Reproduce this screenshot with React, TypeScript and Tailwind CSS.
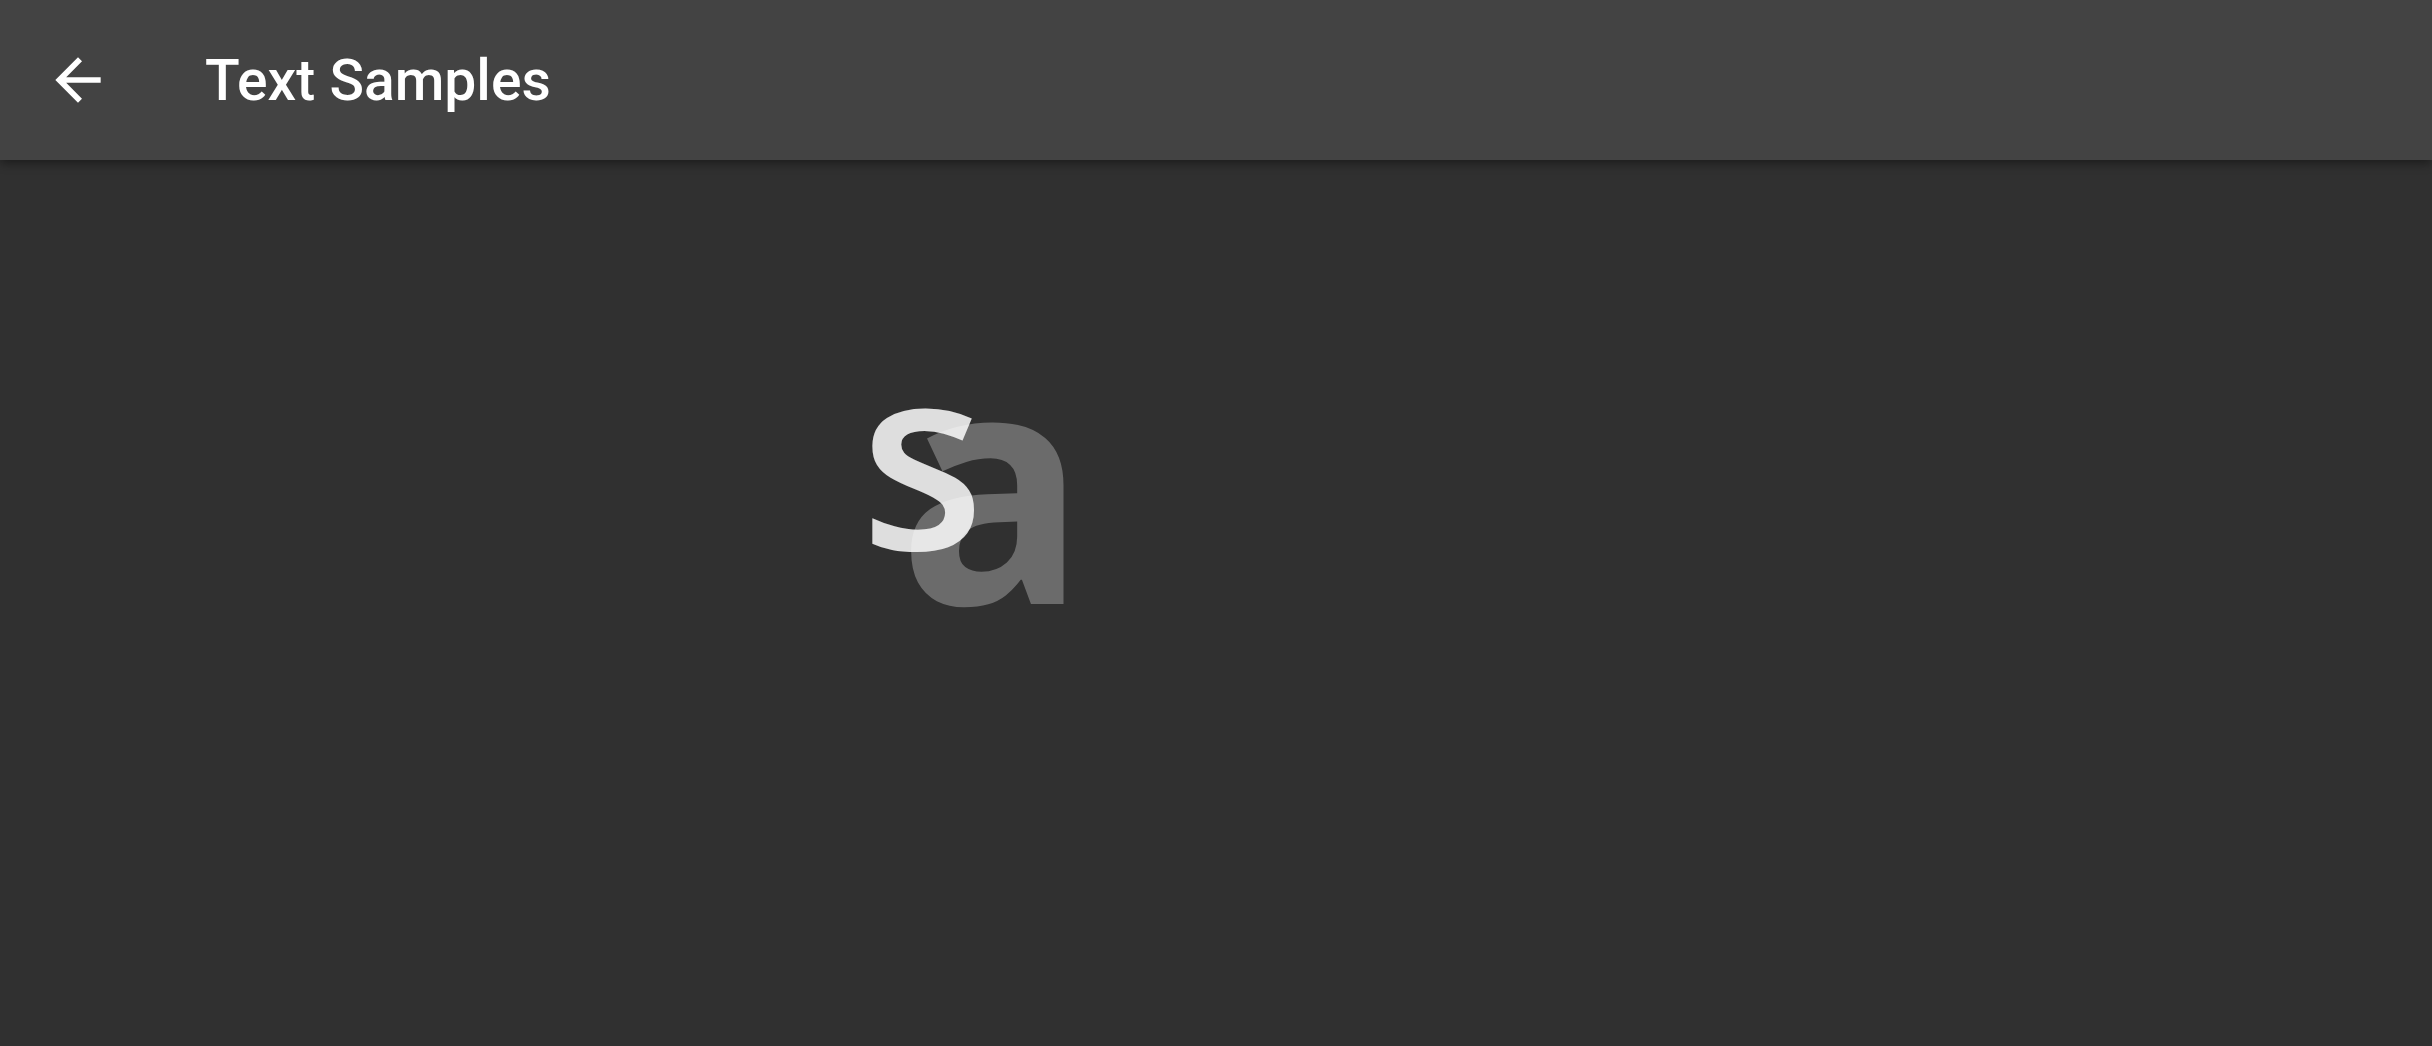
import React from "react";

export default function App() {
  return (
    <div className="w-[2432px] h-[1046px] flex flex-col bg-[#303030] overflow-hidden" style={{ fontFamily: "Roboto, 'Liberation Sans', sans-serif" }}>
      <header className="relative z-10 h-[160px] shrink-0 bg-[#434343] flex items-center shadow-[0_3px_10px_rgba(0,0,0,0.45)]">
        <div className="w-[68px] h-[68px] ml-[44px] flex items-center justify-center">
          <svg viewBox="0 0 24 24" className="w-[68px] h-[68px]" fill="#ffffff">
            <path d="M20 11H7.83l5.59-5.59L12 4l-8 8 8 8 1.41-1.41L7.83 13H20v-2z" />
          </svg>
        </div>
        <h1 className="ml-[93px] text-[57px] font-medium text-white leading-none">Text Samples</h1>
      </header>
      <main className="relative flex-1">
        <span
          className="absolute left-[898px] top-[155px] text-[326px] font-bold leading-none text-white/[0.285] select-none origin-left scale-x-[0.96]"
          style={{ fontFamily: "'Open Sans', sans-serif" }}
        >
          a
        </span>
        <span
          className="absolute left-[860px] top-[163px] text-[256px] font-semibold leading-none text-white/[0.84] select-none"
          style={{ fontFamily: "'Open Sans', sans-serif" }}
        >
          s
        </span>
      </main>
    </div>
  );
}
